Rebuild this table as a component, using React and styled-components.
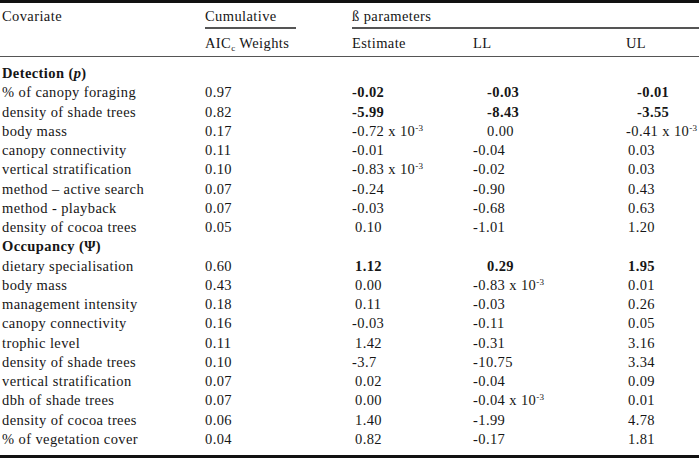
import React from "react";
import styled, { createGlobalStyle } from "styled-components";

const GlobalStyle = createGlobalStyle`
  html, body {
    margin: 0;
    padding: 0;
    background: #ffffff;
  }
  body {
    font-family: "Liberation Serif", "DejaVu Serif", serif;
    color: #161616;
  }
`;

const COLS = "205px 147px 121px 153px 1fr";

const Table = styled.div`
  width: 699px;
  border-top: 3px solid #111;
  border-bottom: 3px solid #111;
  font-size: 14.5px;
  letter-spacing: 0.4px;
`;

const Head = styled.div`
  display: grid;
  grid-template-columns: ${COLS};
  grid-template-rows: 26px 26px;
  row-gap: 1px;
  border-bottom: 1.5px solid #555;
`;

const HeadCell = styled.div`
  grid-column: ${(p) => p.col};
  grid-row: ${(p) => p.row};
  width: ${(p) => (p.w ? p.w + "px" : "auto")};
  line-height: 26px;
  padding-left: ${(p) => p.pad || 0}px;
  border-bottom: ${(p) => (p.underline ? "2px solid #555" : "none")};
  white-space: nowrap;
`;

const Body = styled.div`
  padding: 7px 0 6px;
`;

const Row = styled.div`
  display: grid;
  grid-template-columns: ${COLS};
  height: 19.25px;
  line-height: 19.25px;
  white-space: nowrap;
`;

const Label = styled.div`
  padding-left: 2px;
`;

const Section = styled.div`
  padding-left: 2px;
  font-weight: 700;
  grid-column: 1 / span 2;
`;

const Cell = styled.div`
  padding-left: ${(p) => p.indent || 0}px;
  font-weight: ${(p) => (p.bold ? 700 : 400)};
`;

const Sup = styled.sup`
  font-size: 9px;
  line-height: 0;
  vertical-align: 5px;
`;

const Sub = styled.sub`
  font-size: 9px;
  line-height: 0;
  vertical-align: -3px;
`;

const Num = ({ v }) => {
  const [base, exp] = v.split("^");
  return (
    <>
      {base}
      {exp && <Sup>{exp}</Sup>}
    </>
  );
};

// cells: plain string, or { v, b: bold, i: indent }
const detection = [
  ["% of canopy foraging", "0.97", { v: "-0.02", b: 1 }, { v: "-0.03", b: 1, i: 14 }, { v: "-0.01", b: 1, i: 11 }],
  ["density of shade trees", "0.82", { v: "-5.99", b: 1 }, { v: "-8.43", b: 1, i: 14 }, { v: "-3.55", b: 1, i: 11 }],
  ["body mass", "0.17", "-0.72 x 10^-3", { v: "0.00", i: 14 }, "-0.41 x 10^-3"],
  ["canopy connectivity", "0.11", "-0.01", "-0.04", { v: "0.03", i: 2 }],
  ["vertical stratification", "0.10", "-0.83 x 10^-3", "-0.02", { v: "0.03", i: 2 }],
  ["method – active search", "0.07", "-0.24", "-0.90", { v: "0.43", i: 2 }],
  ["method - playback", "0.07", "-0.03", "-0.68", { v: "0.63", i: 2 }],
  ["density of cocoa trees", "0.05", { v: "0.10", i: 3 }, "-1.01", { v: "1.20", i: 2 }],
];

const occupancy = [
  ["dietary specialisation", "0.60", { v: "1.12", b: 1, i: 3 }, { v: "0.29", b: 1, i: 14 }, { v: "1.95", b: 1, i: 2 }],
  ["body mass", "0.43", { v: "0.00", i: 3 }, "-0.83 x 10^-3", { v: "0.01", i: 2 }],
  ["management intensity", "0.18", { v: "0.11", i: 3 }, "-0.03", { v: "0.26", i: 2 }],
  ["canopy connectivity", "0.16", "-0.03", "-0.11", { v: "0.05", i: 2 }],
  ["trophic level", "0.11", { v: "1.42", i: 3 }, "-0.31", { v: "3.16", i: 2 }],
  ["density of shade trees", "0.10", "-3.7", "-10.75", { v: "3.34", i: 2 }],
  ["vertical stratification", "0.07", { v: "0.02", i: 3 }, "-0.04", { v: "0.09", i: 2 }],
  ["dbh of shade trees", "0.07", { v: "0.00", i: 3 }, "-0.04 x 10^-3", { v: "0.01", i: 2 }],
  ["density of cocoa trees", "0.06", { v: "1.40", i: 3 }, "-1.99", { v: "4.78", i: 2 }],
  ["% of vegetation cover", "0.04", { v: "0.82", i: 3 }, "-0.17", { v: "1.81", i: 2 }],
];

const DataRow = ({ row }) => {
  const [label, ...cells] = row;
  return (
    <Row>
      <Label>{label}</Label>
      {cells.map((c, i) => {
        const cell = typeof c === "string" ? { v: c } : c;
        return (
          <Cell key={i} bold={cell.b} indent={cell.i}>
            <Num v={cell.v} />
          </Cell>
        );
      })}
    </Row>
  );
};

const App = () => {
  return (
    <>
      <GlobalStyle />
      <Table>
        <Head>
          <HeadCell col="1" row="1" pad={2}>
            Covariate
          </HeadCell>
          <HeadCell col="2" row="1" w={91} underline>
            Cumulative
          </HeadCell>
          <HeadCell col="3 / span 3" row="1" underline>
            ß parameters
          </HeadCell>
          <HeadCell col="2" row="2">
            AIC<Sub>c</Sub> Weights
          </HeadCell>
          <HeadCell col="3" row="2">
            Estimate
          </HeadCell>
          <HeadCell col="4" row="2">
            LL
          </HeadCell>
          <HeadCell col="5" row="2">
            UL
          </HeadCell>
        </Head>
        <Body>
          <Row>
            <Section>
              Detection (<i>p</i>)
            </Section>
          </Row>
          {detection.map((r, i) => (
            <DataRow key={"d" + i} row={r} />
          ))}
          <Row>
            <Section>Occupancy (Ψ)</Section>
          </Row>
          {occupancy.map((r, i) => (
            <DataRow key={"o" + i} row={r} />
          ))}
        </Body>
      </Table>
    </>
  );
};

export default App;
